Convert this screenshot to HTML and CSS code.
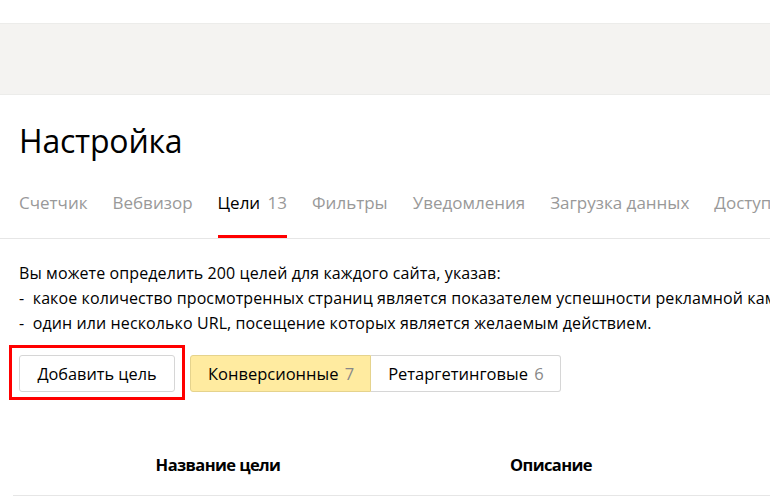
FILE: index.html
```html
<!DOCTYPE html>
<html lang="ru">
<head>
<meta charset="utf-8">
<link rel="stylesheet" href="styles.css">
</head>
<body>
<div class="topbar"></div>
<main class="page">
  <h1 class="title">Настройка</h1>
  <nav class="tabs">
    <span class="tab">Счетчик</span>
    <span class="tab">Вебвизор</span>
    <span class="tab tab-active">Цели <span class="count">13</span></span>
    <span class="tab">Фильтры</span>
    <span class="tab">Уведомления</span>
    <span class="tab">Загрузка данных</span>
    <span class="tab">Доступ</span>
  </nav>
  <div class="intro">
    <p>Вы можете определить 200 целей для каждого сайта, указав:</p>
    <p>-&nbsp; какое количество просмотренных страниц является показателем успешности рекламной кампании;</p>
    <p>-&nbsp; один или несколько URL, посещение которых является желаемым действием.</p>
  </div>
  <div class="actions">
    <div class="highlight">
      <button class="btn">Добавить цель</button>
    </div>
    <div class="segmented">
      <button class="seg seg-active">Конверсионные <span class="seg-count">7</span></button>
      <button class="seg">Ретаргетинговые <span class="seg-count">6</span></button>
    </div>
  </div>
  <div class="table-head">
    <div class="th th-name">Название цели</div>
    <div class="th th-desc">Описание</div>
  </div>
</main>
</body>
</html>
```
FILE: styles.css
```css
* { box-sizing: border-box; }
html { overflow: hidden; }
html, body { margin: 0; padding: 0; background: #fff; }
body {
  font-family: "Open Sans", "Noto Sans", sans-serif;
  color: #000;
  width: 770px;
  overflow: hidden;
}
.topbar {
  margin-top: 23px;
  height: 72px;
  background: #f4f3f1;
  border-top: 1px solid #ececea;
  border-bottom: 1px solid #ececea;
}
.page {
  padding-left: 19px;
  overflow: hidden;
}
.title {
  margin: 0;
  padding-top: 22px;
  font-size: 32px;
  font-weight: 400;
  line-height: 48px;
  letter-spacing: -0.2px;
}
.tabs {
  display: flex;
  gap: 25px;
  margin-top: 22px;
  margin-left: -19px;
  padding-left: 19px;
  border-bottom: 1px solid #e6e6e6;
  white-space: nowrap;
  overflow: hidden;
}
.tab {
  font-size: 17px;
  color: #999;
  line-height: 24px;
  padding: 4px 0 20px;
  border-bottom: 3px solid transparent;
  flex: none;
}
.tab-active {
  color: #000;
  border-bottom-color: #f00;
}
.tab-active .count { color: #999; margin-left: 3px; }
.intro {
  margin-top: 22px;
  font-size: 16px;
  letter-spacing: 0.1px;
  line-height: 25px;
  white-space: nowrap;
  overflow: hidden;
}
.intro p { margin: 0; }
.actions {
  display: flex;
  align-items: center;
  margin-top: 9px;
}
.highlight {
  margin-left: -10px;
  border: 3px solid #f00;
  padding: 7px 7px 5px 7px;
}
.btn {
  display: block;
  width: 156px;
  height: 37px;
  background: #fff;
  border: 1px solid #d6d6d6;
  border-radius: 3px;
  font-family: inherit;
  font-size: 16.3px;
  color: #000;
  padding: 0;
}
.segmented {
  display: flex;
  margin-left: 5px;
  margin-top: 2px;
}
.seg {
  height: 37px;
  font-family: inherit;
  font-size: 16.5px;
  color: #000;
  background: #fff;
  border: 1px solid #d6d6d6;
  padding: 0 16px 0 17px;
}
.seg:first-child { border-radius: 3px 0 0 3px; }
.seg:last-child { border-radius: 0 3px 3px 0; border-left: none; }
.seg-active {
  background: #ffeba0;
  border-color: #e5d38d;
}
.seg-count { color: #888; margin-left: 2px; }
.table-head {
  display: flex;
  margin-top: 49px;
  margin-left: -6px;
  border-bottom: 1px solid #e6e6e6;
  height: 47px;
}
.th {
  font-weight: 700;
  font-size: 16.5px;
  letter-spacing: -0.6px;
  line-height: 22px;
  padding-top: 5px;
  text-align: center;
}
.th-name { width: 410px; }
.th-desc { width: 256px; }
```
